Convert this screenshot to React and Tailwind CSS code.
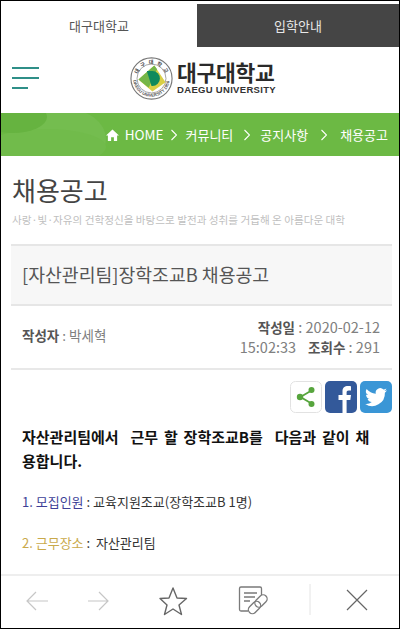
const KR = { fontFamily: '"Noto Sans CJK KR", "Noto Sans", sans-serif' };

function Seal() {
  return (
    <svg width="43" height="43" viewBox="0 0 46 46" className="shrink-0">
      <defs>
        <path id="sealTop" d="M7.500 23a15.500 15.500 0 0 1 31 0" />
        <path id="sealBottom" d="M3.500 23a19.500 19.500 0 0 0 39 0" />
      </defs>
      <circle cx="23" cy="23" r="22" fill="#fff" stroke="#777" strokeWidth="1.200" />
      <circle cx="23" cy="23" r="15.500" fill="#fff" stroke="#888" strokeWidth="0.800" />
      <text fontSize="5.500" fill="#444" fontWeight="700" style={KR}>
        <textPath href="#sealTop" startOffset="10%" textLength="38">대구대학교</textPath>
      </text>
      <text fontSize="4.600" fill="#555" fontWeight="700" style={{ fontFamily: '"Liberation Sans", sans-serif' }}>
        <textPath href="#sealBottom" startOffset="3%" textLength="56">DAEGU UNIVERSITY 1956</textPath>
      </text>
      <path d="M9 24 L26 9 L38 27 L24 37 Z" fill="#d9cf45" />
      <path d="M9 24 L26 9 L29 13 L20 33 Z" fill="#74b648" />
      <path d="M18 15 h6 a8 8 0 0 1 8 8 v0 a8 8 0 0 1 -8 8 h-1 Z" fill="#0f8a5c" />
    </svg>
  );
}

function Share() {
  return (
    <svg width="32" height="32" viewBox="0 0 32 32">
      <rect x="0.500" y="0.500" width="31" height="31" rx="5" fill="#fff" stroke="#e2e2e2" />
      <path d="M21.500 9.500 L10.500 16 L21.500 22.500" fill="none" stroke="#57a53d" strokeWidth="1.800" />
      <circle cx="21.500" cy="9" r="3" fill="#57a53d" />
      <circle cx="10" cy="16" r="3.200" fill="#57a53d" />
      <circle cx="21.500" cy="23" r="3" fill="#57a53d" />
    </svg>
  );
}

function Facebook() {
  return (
    <svg width="32" height="32" viewBox="0 0 32 32">
      <rect width="32" height="32" rx="5" fill="#33599a" />
      <path d="M17.500 32V19h-4v-5h4v-3.600C17.500 6.600 19.700 5 23 5c1.400 0 2.600.1 3 .2v4.300h-2.200c-1.800 0-2.200.9-2.200 2.100V14H26l-.7 5h-3.700v13z" fill="#fff" />
    </svg>
  );
}

function Twitter() {
  return (
    <svg width="32" height="32" viewBox="0 0 32 32">
      <rect width="32" height="32" rx="5" fill="#3a96d6" />
      <path d="M27 9.300c-.8.4-1.700.6-2.600.7.900-.6 1.700-1.400 2-2.500-.9.500-1.900.9-2.900 1.100a4.500 4.500 0 0 0-7.700 4.100C12.100 12.500 8.800 10.700 6.600 8a4.500 4.500 0 0 0 1.400 6c-.7 0-1.400-.2-2-.6 0 2.200 1.500 4 3.600 4.500-.7.200-1.400.2-2 .1.600 1.800 2.200 3.100 4.200 3.100A9 9 0 0 1 5.200 23a12.800 12.800 0 0 0 19.700-11.300c.9-.6 1.600-1.400 2.100-2.400z" fill="#fff" />
    </svg>
  );
}

function Chevron() {
  return (
    <svg width="6" height="12" viewBox="0 0 6 12" className="shrink-0">
      <path d="M0.500 1 L5.500 6 L0.500 11" fill="none" stroke="#fff" strokeWidth="1.100" />
    </svg>
  );
}

export default function App() {
  return (
    <div className="h-[629px] w-[400px] overflow-hidden flex flex-col bg-white border border-black" style={KR}>
      <div className="flex h-[46px] shrink-0 pt-[3px]">
        <div className="w-[196px] flex items-center justify-center text-[13px] text-[#555]">대구대학교</div>
        <div className="flex-1 bg-[#454545] flex items-center justify-center text-[13px] text-[#e8e8e8]">입학안내</div>
      </div>

      <div className="relative h-[66px] shrink-0 flex items-center justify-center">
        <div className="absolute left-[11px] top-[20px] flex flex-col gap-[8px]">
          <div className="w-[27px] h-[2px] bg-[#2f8f88]" />
          <div className="w-[27px] h-[2px] bg-[#2f8f88]" />
          <div className="w-[16px] h-[2px] bg-[#2f8f88]" />
        </div>
        <div className="flex items-center gap-[4px] ml-[6px] mt-[-3px]">
          <Seal />
          <div className="flex flex-col mt-[-3px]">
            <span className="text-[21.500px] leading-[24px] font-bold text-[#2a2a2a] tracking-[-0.300px]">대구대학교</span>
            <span className="text-[9.500px] leading-[11px] font-bold text-[#333] tracking-[0.300px]" style={{ fontFamily: '"Liberation Sans", sans-serif' }}>DAEGU UNIVERSITY</span>
          </div>
        </div>
      </div>

      <div className="relative h-[43px] shrink-0 bg-[#6cb944] overflow-hidden flex items-center justify-end pr-[11px] text-white text-[13px]">
        <svg className="absolute left-0 top-0" width="220" height="43" viewBox="0 0 220 43">
          <ellipse cx="65" cy="26" rx="40" ry="30" fill="#74bd4f" />
          <ellipse cx="45" cy="34" rx="60" ry="18" fill="#71bb4b" />
          <ellipse cx="12" cy="4" rx="34" ry="16" fill="#66b340" />
        </svg>
        <div className="relative flex items-center">
          <svg width="13" height="12" viewBox="0 0 14 13" className="mr-[6px]">
            <path d="M7 0.500 L14 7 H12 V13 H8.500 V9 H5.500 V13 H2 V7 H0 Z" fill="#fff" />
          </svg>
          <span className="text-[13.500px]">HOME</span>
          <span className="mx-[8px] flex"><Chevron /></span>
          <span>커뮤니티</span>
          <span className="mx-[10.500px] flex"><Chevron /></span>
          <span>공지사항</span>
          <span className="mx-[13px] flex"><Chevron /></span>
          <span>채용공고</span>
        </div>
      </div>

      <div className="flex-1 min-h-0 overflow-hidden pl-[10px] pr-[7px]">
        <h1 className="text-[26px] leading-[38px] mt-[15px] text-[#444] ml-px">채용공고</h1>
        <p className="text-[10.600px] leading-[16px] mt-[3px] text-[#c0c0c0] whitespace-nowrap ml-px">사랑·빛·자유의 건학정신을 바탕으로 발전과 성취를 거듭해 온 아름다운 대학</p>

        <div className="mt-[16px] border-t-2 border-b-2 border-[#e6e6e6] bg-[#f7f7f7] h-[62px] flex items-center pl-[11px] text-[18.300px] text-[#555]">
          [자산관리팀]장학조교B 채용공고
        </div>

        <div className="h-[64px] border-b-2 border-[#e8e8e8] flex items-center justify-between pl-[11px] pr-[12px] text-[13.500px] text-[#808080]">
          <div className="mt-[-3px]"><b className="font-bold text-[#555]">작성자</b> : 박세혁</div>
          <div className="text-right leading-[20px] text-[14.500px]">
            <div><b className="font-bold text-[#555] text-[13.500px]">작성일</b> : 2020-02-12</div>
            <div><span className="mr-[12px]">15:02:33</span><b className="font-bold text-[#555] text-[13.500px]">조회수</b> : 291</div>
          </div>
        </div>

        <div className="flex justify-end gap-[3px] mt-[11px]">
          <Share />
          <Facebook />
          <Twitter />
        </div>

        <p className="mt-[12px] pl-[11px] pr-[14px] text-[15px] leading-[24px] font-bold text-[#111] break-all [word-spacing:2.500px]">
          자산관리팀에서&nbsp; 근무 할 장학조교B를&nbsp; 다음과 같이 채용합니다.
        </p>
        <p className="mt-[19px] pl-[11px] text-[13px] leading-[20px] text-[#333]">
          <span className="text-[#3d3f97]">1. 모집인원</span> : 교육지원조교(장학조교B 1명)
        </p>
        <p className="mt-[21px] pl-[11px] text-[13px] leading-[20px] text-[#333]">
          <span className="text-[#c9a94a]">2. 근무장소</span> :&nbsp; 자산관리팀
        </p>
      </div>

      <div className="relative h-[54px] shrink-0 bg-white border-t-2 border-[#eeeeee] flex items-center">
        <svg width="400" height="52" viewBox="0 0 400 52" className="absolute left-[-1px] top-0">
          <g fill="none" stroke="#c6c6c6" strokeWidth="1.200">
            <path d="M48 25 H27 M36 16 L27 25 L36 34" />
            <path d="M88 25 H108 M99 16 L108 25 L99 34" />
          </g>
          <path d="M173 12 L177 22 L186.500 22.500 L179 29 L181.500 38.500 L173 33 L164.500 38.500 L167 29 L160 22.500 L169 22 Z" fill="none" stroke="#666" strokeWidth="1.400" strokeLinejoin="round" />
          <g fill="none" stroke="#7a7a7a" strokeWidth="1.300">
            <path d="M248 35 H241 a1.500 1.500 0 0 1 -1.500 -1.500 V12.500 A1.500 1.500 0 0 1 241 11 H260 a1.500 1.500 0 0 1 1.500 1.500 V19" />
            <path d="M244 17 H257 M244 21 H255 M244 25 H250" />
            <rect x="247.500" y="27.500" width="14" height="8" rx="4" transform="rotate(-45 254.500 31.500)" fill="#fff" />
            <rect x="254" y="21" width="14" height="8" rx="4" transform="rotate(-45 261 25)" />
          </g>
          <path d="M310 8 V39" stroke="#e4e4e4" />
          <path d="M347 14 L367 34 M367 14 L347 34" stroke="#666" strokeWidth="1.200" />
        </svg>
      </div>
    </div>
  );
}
